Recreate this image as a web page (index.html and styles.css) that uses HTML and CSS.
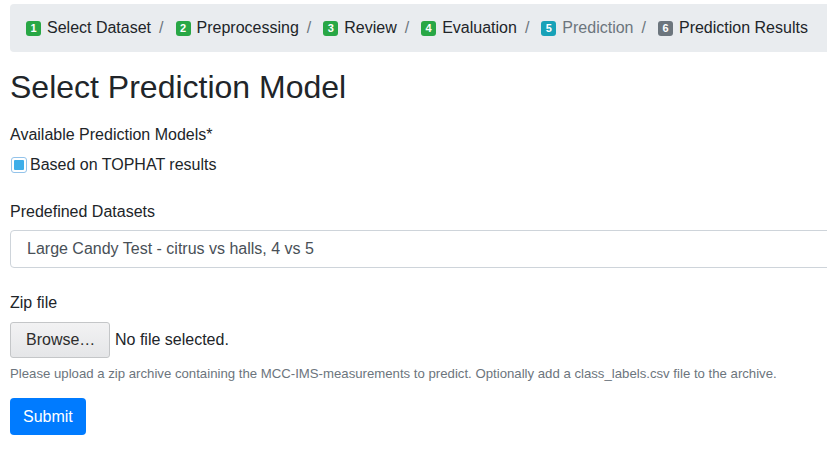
FILE: index.html
```html
<!DOCTYPE html>
<html>
<head>
<meta charset="utf-8">
<link rel="stylesheet" href="styles.css">
</head>
<body>
<div class="page">
  <nav class="crumbs">
    <span class="crumb"><span class="badge ok">1</span>Select Dataset</span>
    <span class="sep">/</span>
    <span class="crumb"><span class="badge ok">2</span>Preprocessing</span>
    <span class="sep">/</span>
    <span class="crumb"><span class="badge ok">3</span>Review</span>
    <span class="sep">/</span>
    <span class="crumb"><span class="badge ok">4</span>Evaluation</span>
    <span class="sep">/</span>
    <span class="crumb active"><span class="badge info">5</span>Prediction</span>
    <span class="sep">/</span>
    <span class="crumb"><span class="badge gray">6</span>Prediction Results</span>
  </nav>
  <h1 class="title">Select Prediction Model</h1>
  <div class="group">
    <div class="label">Available Prediction Models*</div>
    <label class="check"><span class="box"><span class="fill"></span></span>Based on TOPHAT results</label>
  </div>
  <div class="group">
    <div class="label">Predefined Datasets</div>
    <div class="select">Large Candy Test - citrus vs halls, 4 vs 5</div>
  </div>
  <div class="group last">
    <div class="label">Zip file</div>
    <div class="file"><span class="browse">Browse…</span><span class="nofile">No file selected.</span></div>
    <div class="help">Please upload a zip archive containing the MCC-IMS-measurements to predict. Optionally add a class_labels.csv file to the archive.</div>
  </div>
  <div class="submit">Submit</div>
</div>
</body>
</html>
```
FILE: styles.css
```css
html, body { margin: 0; padding: 0; overflow: hidden; background: #fff; }
body { font-family: "Liberation Sans", Arial, sans-serif; font-size: 16px; line-height: 24px; color: #212529; }
.page { width: 860px; padding: 4px 0 0 10px; }
.crumbs { display: flex; align-items: center; background: #e9ecef; border-radius: 4px; padding: 12px 16px; height: 24px; }
.crumb { display: flex; align-items: center; white-space: nowrap; }
.crumb.active { color: #6c757d; }
.sep { color: #6c757d; padding: 0 12px 0 8px; }
.badge { display: inline-flex; align-items: center; justify-content: center; width: 15px; height: 15px; border-radius: 3px; color: #fff; font-size: 11px; font-weight: bold; line-height: 1; margin-right: 6px; }
.badge.ok { background: #28a745; }
.badge.info { background: #17a2b8; }
.badge.gray { background: #6c757d; }
.title { font-size: 32px; font-weight: 400; line-height: 38px; margin: 16px 0 17px; }
.group { margin-bottom: 23px; }
.group.last { margin-bottom: 15px; }
.label { margin-bottom: 6px; }
.check { display: flex; align-items: center; }
.box { width: 14px; height: 14px; border: 1px solid #93c3ea; border-radius: 3px; display: inline-flex; align-items: center; justify-content: center; margin: 0 3px 0 1px; background: #fff; }
.fill { width: 10px; height: 10px; background: #3daee9; border-radius: 1px; }
.select { height: 36px; border: 1px solid #ced4da; border-radius: 4px; padding: 0 16px; display: flex; align-items: center; color: #495057; }
.file { display: flex; align-items: center; height: 38px; }
.browse { display: flex; align-items: center; height: 34px; padding: 0 14px 0 15px; border: 1px solid #c4c6c8; border-radius: 3px; background: linear-gradient(#f2f2f3, #e5e6e8); color: #2d2d2d; margin-right: 5px; box-sizing: content-box; width: 69px; }
.nofile { color: #212529; }
.help { font-size: 13.2px; color: #6c757d; margin-top: 5px; line-height: 19px; }
.submit { display: inline-flex; align-items: center; height: 37px; padding: 0 13px; background: #007bff; color: #fff; border-radius: 4px; box-sizing: border-box; }
```
